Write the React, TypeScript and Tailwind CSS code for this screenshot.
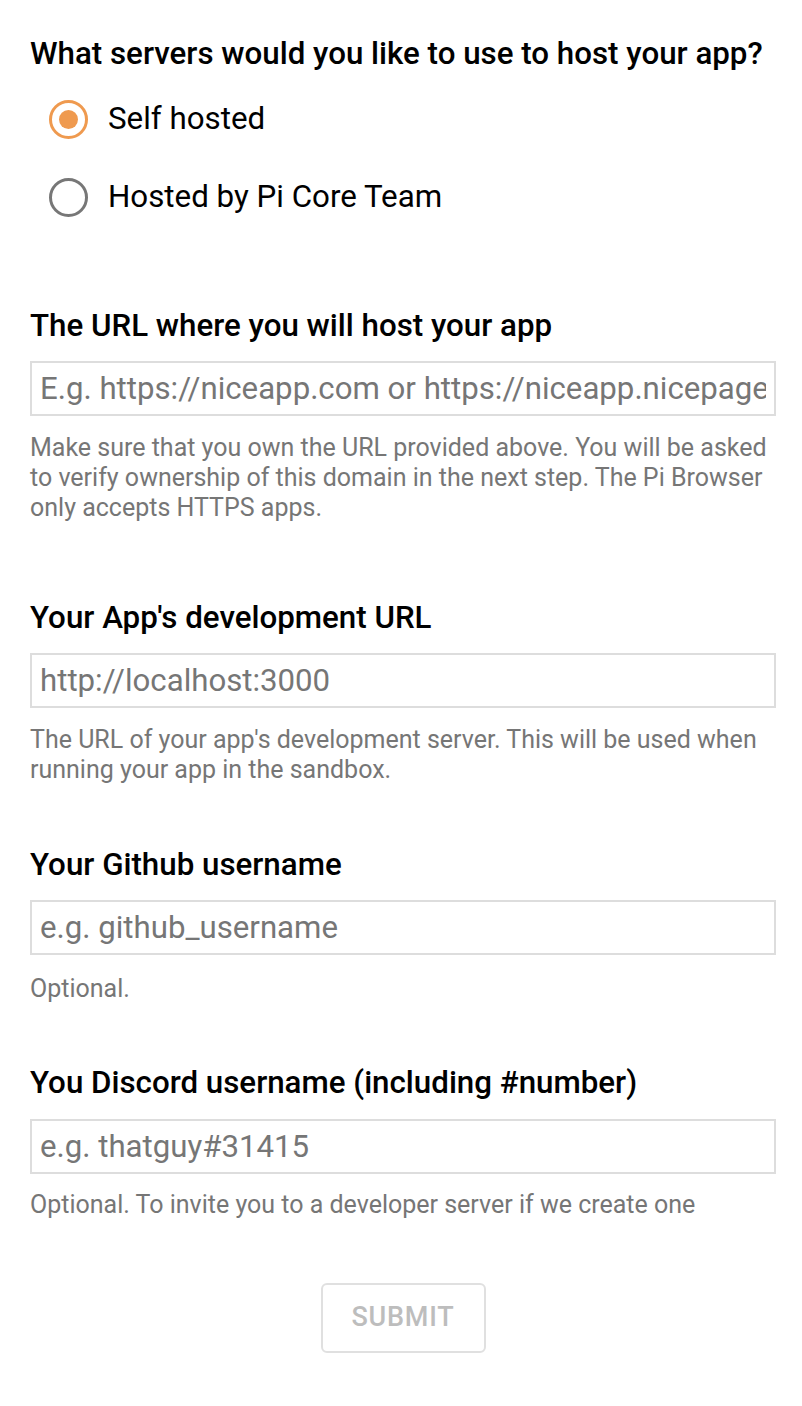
import React from 'react';

const fields = [
  {
    label: 'The URL where you will host your app',
    placeholder: 'E.g. https://niceapp.com or https://niceapp.nicepages.com',
    help: 'Make sure that you own the URL provided above. You will be asked to verify ownership of this domain in the next step. The Pi Browser only accepts HTTPS apps.',
    top: 'mt-[72px]',
    inputTop: 'mt-[17px]',
    helpTop: 'mt-[16.5px]',
  },
  {
    label: "Your App's development URL",
    placeholder: 'http://localhost:3000',
    help: "The URL of your app's development server. This will be used when running your app in the sandbox.",
    top: 'mt-[77px]',
    inputTop: 'mt-[17.5px]',
    helpTop: 'mt-[16.5px]',
  },
  {
    label: 'Your Github username',
    placeholder: 'e.g. github_username',
    help: 'Optional.',
    top: 'mt-[62px]',
    inputTop: 'mt-[17px]',
    helpTop: 'mt-[19px]',
  },
  {
    label: 'You Discord username (including #number)',
    placeholder: 'e.g. thatguy#31415',
    help: 'Optional. To invite you to a developer server if we create one',
    top: 'mt-[61px]',
    inputTop: 'mt-[18px]',
    helpTop: 'mt-[16.5px]',
  },
];

const Radio = ({ checked, label }: { checked: boolean; label: string }) => (
  <label className="flex h-[78px] items-center cursor-pointer">
    <span
      className={`flex h-[39px] w-[39px] items-center justify-center rounded-full border-[3px] ${
        checked ? 'border-[#ef9a4f]' : 'border-[#777777]'
      }`}
    >
      {checked && <span className="h-[19px] w-[19px] rounded-full bg-[#ef9a4f]" />}
    </span>
    <span className="ml-[20px] text-[31.3px] leading-[38px] text-black">{label}</span>
  </label>
);

export default function App() {
  return (
    <div className="min-h-[1406px] bg-white pl-[30px] pr-[26px] pt-[36px] font-['Roboto',sans-serif]">
      <h1 className="text-[31.3px] font-medium leading-[36px] text-black">
        What servers would you like to use to host your app?
      </h1>

      <div className="mt-[8px] pl-[19px]">
        <Radio checked label="Self hosted" />
        <Radio checked={false} label="Hosted by Pi Core Team" />
      </div>

      {fields.map((f) => (
        <div key={f.label} className={f.top}>
          <h2 className="text-[31.3px] font-medium leading-[36px] text-black">{f.label}</h2>
          <input
            type="text"
            placeholder={f.placeholder}
            className={`${f.inputTop} block h-[55px] w-full border-2 border-[#dddddd] bg-white px-[8px] text-[31.2px] text-black outline-none placeholder:text-[#767676]`}
          />
          <p className={`${f.helpTop} text-[25px] leading-[30px] text-[#767676]`}>{f.help}</p>
        </div>
      ))}

      <div className="mt-[62.5px] flex justify-center">
        <button
          disabled
          className="h-[70px] w-[165px] rounded-[6px] border-2 border-[#e0e0e0] bg-white text-[27px] font-medium uppercase tracking-[0.8px] text-[#bdbdbd]"
        >
          Submit
        </button>
      </div>
    </div>
  );
}
